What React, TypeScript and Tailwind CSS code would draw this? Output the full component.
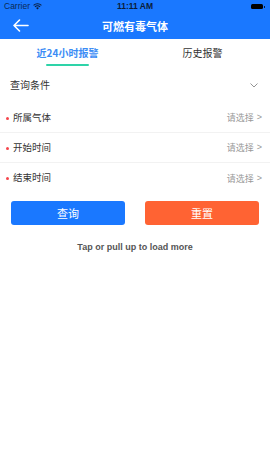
import React from "react";

const cjk = { fontFamily: '"Noto Sans CJK SC", "Noto Sans", sans-serif' };
const latin = { fontFamily: '"Liberation Sans", Arial, sans-serif' };

function Row({ label, last }: { label: string; last?: boolean }) {
  return (
    <div
      className={`flex h-[30px] items-center justify-between pl-[6px] pr-[8px] ${last ? "" : "border-b border-[#f2f2f2]"}`}
    >
      <div className="flex items-center">
        <span className="mr-[4px] mt-[1px] h-[3px] w-[3px] rounded-full bg-[#f5454b]" />
        <span className="text-[9.5px] leading-none text-[#333]">{label}</span>
      </div>
      <div className="flex items-center text-[9px] leading-none text-[#999]">
        <span>请选择</span>
        <span className="ml-[3px]" style={latin}>&gt;</span>
      </div>
    </div>
  );
}

export default function App() {
  return (
    <div className="relative h-[450px] w-[270px] overflow-hidden bg-white" style={cjk}>
      {/* Header */}
      <div className="h-[39px] bg-[#1a78ff]">
        <div className="flex h-[13px] items-center justify-between px-[4px]" style={latin}>
          <div className="flex w-[60px] items-center text-[8.5px] leading-none text-[#0b2a55]">
            <span>Carrier</span>
            <svg className="ml-[3px]" width="9" height="7" viewBox="0 0 12 9">
              <path d="M6 8.5 L4.2 6.5 A2.6 2.6 0 0 1 7.8 6.5 Z" fill="#0b1d3a" />
              <path d="M2.6 4.9 A4.8 4.8 0 0 1 9.4 4.9" stroke="#0b1d3a" strokeWidth="1.4" fill="none" />
              <path d="M0.8 3 A7.3 7.3 0 0 1 11.2 3" stroke="#0b1d3a" strokeWidth="1.4" fill="none" />
            </svg>
          </div>
          <span className="text-[8.5px] font-bold leading-none text-[#0b1d3a]">11:11 AM</span>
          <div className="flex w-[60px] justify-end pr-[1px]">
            <div className="flex items-center">
              <div className="h-[5px] w-[12px] rounded-[1.5px] bg-black" />
              <div className="ml-[1px] h-[2px] w-[1px] bg-[#0b1d3a]" />
            </div>
          </div>
        </div>
        <div className="relative flex h-[26px] items-center justify-center">
          <svg className="absolute left-[12px] top-[6px]" width="17" height="13" viewBox="0 0 17 13">
            <path d="M16 6.5 H2 M7.5 1 L2 6.5 L7.5 12" stroke="white" strokeWidth="1.6" fill="none" strokeLinecap="round" strokeLinejoin="round" />
          </svg>
          <span className="text-[11px] font-bold leading-none text-white">可燃有毒气体</span>
        </div>
      </div>

      {/* Tabs */}
      <div className="flex h-[29px]">
        <div className="flex flex-1 flex-col items-center pt-[9px]">
          <span className="text-[10px] font-bold leading-none text-[#3b8cf5]">近24小时报警</span>
          <div className="mt-[6px] h-[2px] w-[43px] rounded-full bg-[#2ed3a8]" />
        </div>
        <div className="flex flex-1 flex-col items-center pt-[9px]">
          <span className="text-[10px] leading-none text-[#333]">历史报警</span>
        </div>
      </div>

      {/* Query conditions */}
      <div className="flex h-[32px] items-center justify-between pl-[10px] pr-[12px] pt-[2px]">
        <span className="text-[10px] leading-none text-[#333]">查询条件</span>
        <svg width="8" height="5" viewBox="0 0 8 5">
          <path d="M0.5 0.5 L4 4 L7.5 0.5" stroke="#888" strokeWidth="0.9" fill="none" />
        </svg>
      </div>

      <div className="mt-[3px]">
        <Row label="所属气体" />
        <Row label="开始时间" />
        <Row label="结束时间" last />
      </div>

      {/* Buttons */}
      <div className="mt-[8px] flex justify-between px-[11px]">
        <button className="flex h-[24px] w-[114px] items-center justify-center rounded-[3px] bg-[#1a78ff] text-[11px] leading-none text-white">
          查询
        </button>
        <button className="flex h-[24px] w-[114px] items-center justify-center rounded-[3px] bg-[#ff6333] text-[11px] leading-none text-white">
          重置
        </button>
      </div>

      <div className="mt-[18px] text-center text-[9px] font-bold leading-none text-[#555]" style={latin}>
        Tap or pull up to load more
      </div>
    </div>
  );
}
